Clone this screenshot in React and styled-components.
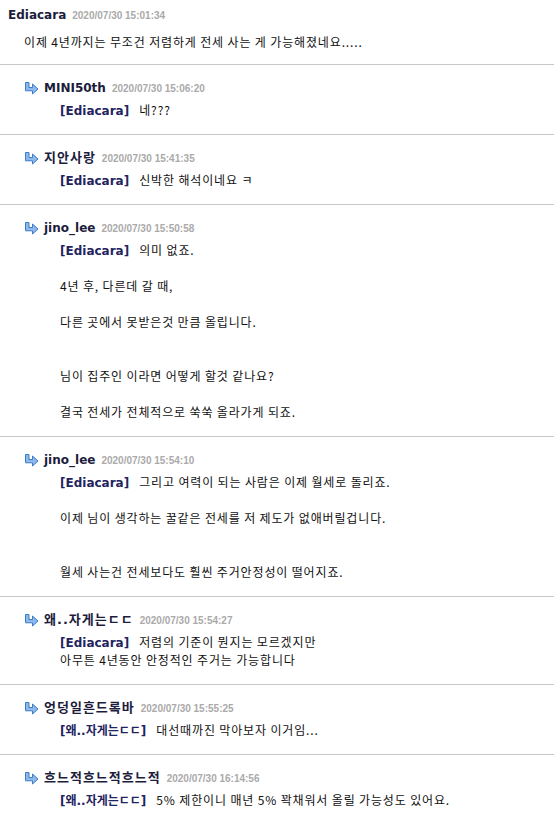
import React from 'react';
import styled, { createGlobalStyle } from 'styled-components';

const GlobalStyle = createGlobalStyle`
  html, body {
    margin: 0;
    padding: 0;
    background: #fff;
  }
  body {
    font-family: "Noto Sans CJK KR", "Noto Sans", sans-serif;
    color: #111;
  }
`;

const List = styled.div`
  width: 554px;
  display: flex;
  flex-direction: column;
`;

const Comment = styled.div`
  display: flex;
  flex-direction: column;
  gap: ${(p) => (p.$reply ? '4px' : '9px')};
  padding: ${(p) => (p.$reply ? '14px 0 15px 24px' : '6px 0 13px 8px')};
  border-top: ${(p) => (p.$reply ? '1px solid #c8c8c8' : 'none')};
`;

const Head = styled.div`
  display: flex;
  align-items: baseline;
  height: 18px;
  line-height: 18px;
  overflow: visible;
`;

const ReplyIcon = styled.svg`
  width: 15px;
  height: 13px;
  margin-right: 5px;
  align-self: center;
  flex: none;
`;

const Name = styled.span`
  font-family: "DejaVu Sans", "Noto Sans CJK KR", sans-serif;
  font-weight: bold;
  font-size: ${(p) => (p.$ko ? '13px' : '12px')};
  letter-spacing: ${(p) => (p.$ko ? '1px' : '0')};
  color: #1c1c3c;
`;

const Date = styled.span`
  font-family: "Liberation Sans", "DejaVu Sans", sans-serif;
  font-weight: bold;
  font-size: 10px;
  color: #aaaaaa;
  margin-left: 6px;
`;

const Body = styled.div`
  padding-left: ${(p) => (p.$reply ? '36px' : '16px')};
  font-size: 12px;
  line-height: 18px;
  letter-spacing: 0.85px;
`;

const Line = styled.div`
  height: 18px;
  white-space: pre;
`;

const Target = styled.span`
  font-family: "DejaVu Sans", "Noto Sans CJK KR", sans-serif;
  font-weight: bold;
  letter-spacing: 0;
  line-height: 18px;
  color: #1f2460;
  margin-right: 10px;
`;

const comments = [
  {
    name: 'Ediacara',
    date: '2020/07/30 15:01:34',
    lines: ['이제 4년까지는 무조건 저렴하게 전세 사는 게 가능해졌네요.....'],
  },
  { reply: true, name: 'MINI50th', date: '2020/07/30 15:06:20', to: 'Ediacara', lines: ['네???'] },
  { reply: true, name: '지안사랑', date: '2020/07/30 15:41:35', to: 'Ediacara', lines: ['신박한 해석이네요 ㅋ'] },
  {
    reply: true,
    name: 'jino_lee',
    date: '2020/07/30 15:50:58',
    to: 'Ediacara',
    lines: [
      '의미 없죠.',
      '',
      '4년 후, 다른데 갈 때,',
      '',
      '다른 곳에서 못받은것 만큼 올립니다.',
      '',
      '',
      '님이 집주인 이라면 어떻게 할것 같나요?',
      '',
      '결국 전세가 전체적으로 쑥쑥 올라가게 되죠.',
    ],
  },
  {
    reply: true,
    name: 'jino_lee',
    date: '2020/07/30 15:54:10',
    to: 'Ediacara',
    lines: [
      '그리고 여력이 되는 사람은 이제 월세로 돌리죠.',
      '',
      '이제 님이 생각하는 꿀같은 전세를 저 제도가 없애버릴겁니다.',
      '',
      '',
      '월세 사는건 전세보다도 훨씬 주거안정성이 떨어지죠.',
    ],
  },
  {
    reply: true,
    name: '왜..자게는ㄷㄷ',
    date: '2020/07/30 15:54:27',
    to: 'Ediacara',
    lines: ['저렴의 기준이 뭔지는 모르겠지만', '아무튼 4년동안 안정적인 주거는 가능합니다'],
  },
  { reply: true, name: '엉덩일흔드록바', date: '2020/07/30 15:55:25', to: '왜..자게는ㄷㄷ', lines: ['대선때까진 막아보자 이거임...'] },
  {
    reply: true,
    name: '흐느적흐느적흐느적',
    date: '2020/07/30 16:14:56',
    to: '왜..자게는ㄷㄷ',
    lines: ['5% 제한이니 매년 5% 꽉채워서 올릴 가능성도 있어요.'],
  },
];

const Arrow = () => (
  <ReplyIcon viewBox="0 0 15 13">
    <path
      d="M1.5 0.5 H5 V5.5 H8.5 V2 L14 7 L8.5 12 V8.8 H1.5 Z"
      fill="#8db8ea"
      stroke="#3c7cc9"
      strokeWidth="1"
      strokeLinejoin="round"
    />
  </ReplyIcon>
);

const hasHangul = (s) => /[\u3131-\uD79D]/.test(s);

const App = () => {
  return (
    <>
      <GlobalStyle />
      <List>
        {comments.map((c, i) => (
          <Comment key={i} $reply={c.reply}>
            <Head>
              {c.reply && <Arrow />}
              <Name $ko={hasHangul(c.name)}>{c.name}</Name>
              <Date>{c.date}</Date>
            </Head>
            <Body $reply={c.reply}>
              {c.lines.map((l, j) => (
                <Line key={j}>
                  {j === 0 && c.to && <Target>[{c.to}]</Target>}
                  {l}
                </Line>
              ))}
            </Body>
          </Comment>
        ))}
      </List>
    </>
  );
};

export default App;
